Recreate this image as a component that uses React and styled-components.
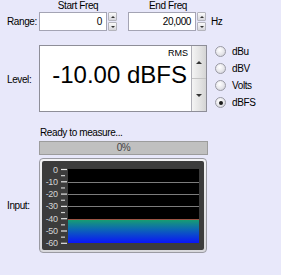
import React from "react";
import styled, { createGlobalStyle } from "styled-components";

const GlobalStyle = createGlobalStyle`
  body {
    margin: 0;
    background: #e8e8fa;
    font-family: "Liberation Sans", Arial, sans-serif;
    font-size: 10px;
    letter-spacing: -0.4px;
    color: #000;
  }
`;

const Panel = styled.div`
  width: 281px;
  height: 275px;
  display: flex;
  flex-direction: column;
`;

const Row = styled.div`
  display: flex;
  align-items: ${(p) => p.align || "center"};
  margin-top: ${(p) => p.top || 0}px;
`;

const Label = styled.div`
  width: 39px;
  flex: none;
  padding-left: 7px;
  box-sizing: border-box;
  line-height: 12px;
`;

const Indent = styled.div`
  margin-left: 39px;
  margin-top: ${(p) => p.top || 0}px;
`;

const HeaderRow = styled(Indent)`
  display: flex;
  gap: 12px;
`;

const Header = styled.div`
  width: 78px;
  text-align: center;
  line-height: 12px;
`;

const Field = styled.div`
  display: flex;
  gap: 1px;
  height: 19px;
  margin-right: ${(p) => p.gapRight || 0}px;
`;

const NumberBox = styled.div`
  width: 68px;
  box-sizing: border-box;
  border: 1px solid #a4a4b4;
  background: #fff;
  text-align: right;
  padding-right: 4px;
  line-height: 17px;
`;

const SmallSpin = styled.div`
  width: 9px;
  display: flex;
  flex-direction: column;
  gap: 1px;
`;

const SpinHalf = styled.div`
  flex: 1;
  display: flex;
  align-items: center;
  justify-content: center;
  border: 1px solid #b4b4bc;
  border-radius: 1px;
  background: linear-gradient(#fafafa, #d6d6dc);
`;

const Arrow = styled.div`
  width: 0;
  height: 0;
  border-left: ${(p) => p.size}px solid transparent;
  border-right: ${(p) => p.size}px solid transparent;
  ${(p) => (p.down ? "border-top" : "border-bottom")}: ${(p) => p.size}px solid #333;
`;

const Unit = styled.span`
  margin-left: 5px;
`;

const LevelBox = styled.div`
  width: 168px;
  height: 67px;
  box-sizing: border-box;
  border: 1px solid #8e8e98;
  background: #fff;
  display: flex;
`;

const Readout = styled.div`
  flex: 1;
  display: flex;
  flex-direction: column;
  align-items: flex-end;
`;

const Mode = styled.div`
  font-size: 9px;
  line-height: 10px;
  letter-spacing: 0;
  padding: 2px 3px 0 0;
`;

const Value = styled.div`
  font-size: 24px;
  line-height: 24px;
  letter-spacing: 0;
  margin-top: 5px;
  padding-right: 4px;
`;

const BigSpin = styled.div`
  width: 14px;
  display: flex;
  flex-direction: column;
  border-left: 1px solid #b0b0b8;
`;

const BigHalf = styled.div`
  flex: 1;
  display: flex;
  align-items: center;
  justify-content: center;
  background: linear-gradient(90deg, #f4f4f4, #e2e2e2 60%, #d4d4d4);
  border-bottom: ${(p) => (p.first ? "1px solid #c4c4c4" : "none")};
`;

const RadioGroup = styled.div`
  display: flex;
  flex-direction: column;
  margin-left: 8px;
  margin-top: -2px;
`;

const RadioItem = styled.label`
  display: flex;
  align-items: center;
  gap: 6px;
  height: 17px;
`;

const Dot = styled.span`
  width: 11px;
  height: 11px;
  box-sizing: border-box;
  border-radius: 50%;
  border: 1px solid #9a9aa4;
  background: radial-gradient(circle at 40% 35%, #ffffff, #e6e6ea 55%, #c8c8d0);
  display: flex;
  align-items: center;
  justify-content: center;

  &::after {
    content: "";
    width: 4px;
    height: 4px;
    border-radius: 50%;
    background: ${(p) => (p.checked ? "#1a1a1a" : "transparent")};
  }
`;

const Status = styled(Indent)`
  line-height: 12px;
  padding-left: 1px;
`;

const Progress = styled(Indent)`
  width: 169px;
  height: 14px;
  box-sizing: border-box;
  border: 1px solid #9c9c9c;
  background: #c0c0c0;
  color: #444;
  text-align: center;
  line-height: 12px;
`;

const MeterFrame = styled.div`
  width: 168px;
  height: 95px;
  box-sizing: border-box;
  border: 1px solid #9a9aa2;
  border-radius: 4px;
  padding: 2px;
  background: linear-gradient(#f2f2f4, #d8d8dc);
`;

const Bezel = styled.div`
  height: 100%;
  border-radius: 2px;
  background: #3c3c3c;
  display: flex;
`;

const scale = [0, -10, -20, -30, -40, -50, -60];
const Y0 = 8.5;
const STEP = 12.3;

const LevelMeter = ({ level }) => {
  const fillY = Math.round(Y0 + (STEP * -level) / 10) + 0.5;
  return (
    <svg width="162" height="89" viewBox="0 0 162 89">
      <defs>
        <linearGradient id="bar" x1="0" y1="0" x2="0" y2="1">
          <stop offset="0" stopColor="#17a070" />
          <stop offset="0.45" stopColor="#0c62b8" />
          <stop offset="1" stopColor="#0a14f8" />
        </linearGradient>
      </defs>
      {scale.map((db, i) => {
        const y = Y0 + STEP * i;
        return (
          <g key={db}>
            <text
              x="15.5"
              y={y + 3}
              textAnchor="end"
              fontSize="9"
              fill="#d4d4d4"
              fontFamily="Liberation Sans, Arial, sans-serif"
            >
              {db === 0 ? "0" : db}
            </text>
            <line x1="19" x2="25" y1={y} y2={y} stroke="#e4e4e4" strokeWidth="1.2" />
            {i < 6 && (
              <line
                x1="19"
                x2="23"
                y1={y + STEP / 2}
                y2={y + STEP / 2}
                stroke="#d0d0d0"
                strokeWidth="1.2"
              />
            )}
          </g>
        );
      })}
      <rect x="26" y="8" width="131" height="74" fill="#000" />
      {[1, 2, 3].map((i) => {
        const y = Math.round(Y0 + STEP * i) + 0.5;
        return <line key={i} x1="26" x2="157" y1={y} y2={y} stroke="#7c7c7c" />;
      })}
      <rect x="26" y={fillY} width="131" height={82 - fillY} fill="url(#bar)" />
      <line x1="26" x2="157" y1={fillY} y2={fillY} stroke="#9a5444" />
    </svg>
  );
};

const Spinner = () => (
  <SmallSpin>
    <SpinHalf>
      <Arrow size={2} />
    </SpinHalf>
    <SpinHalf>
      <Arrow size={2} down />
    </SpinHalf>
  </SmallSpin>
);

const units = ["dBu", "dBV", "Volts", "dBFS"];

export default function App() {
  return (
    <>
      <GlobalStyle />
      <Panel>
        <HeaderRow>
          <Header>Start Freq</Header>
          <Header>End Freq</Header>
        </HeaderRow>
        <Row>
          <Label>Range:</Label>
          <Field gapRight={11}>
            <NumberBox>0</NumberBox>
            <Spinner />
          </Field>
          <Field>
            <NumberBox>20,000</NumberBox>
            <Spinner />
          </Field>
          <Unit>Hz</Unit>
        </Row>
        <Row top={14} align="flex-start">
          <Label style={{ marginTop: 29 }}>Level:</Label>
          <LevelBox>
            <Readout>
              <Mode>RMS</Mode>
              <Value>-10.00 dBFS</Value>
            </Readout>
            <BigSpin>
              <BigHalf first>
                <Arrow size={3} />
              </BigHalf>
              <BigHalf>
                <Arrow size={3} down />
              </BigHalf>
            </BigSpin>
          </LevelBox>
          <RadioGroup>
            {units.map((u) => (
              <RadioItem key={u}>
                <Dot checked={u === "dBFS"} />
                {u}
              </RadioItem>
            ))}
          </RadioGroup>
        </Row>
        <Status top={15}>Ready to measure...</Status>
        <Progress top={2}>0%</Progress>
        <Row top={3}>
          <Label>Input:</Label>
          <MeterFrame>
            <Bezel>
              <LevelMeter level={-40} />
            </Bezel>
          </MeterFrame>
        </Row>
      </Panel>
    </>
  );
}
